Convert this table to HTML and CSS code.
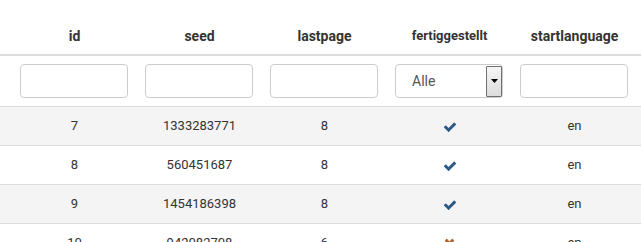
FILE: index.html
```html
<!DOCTYPE html>
<html>
<head>
<meta charset="utf-8">
<link rel="stylesheet" href="styles.css">
</head>
<body>
<table class="grid">
  <colgroup>
    <col class="gutter">
    <col class="c"><col class="c"><col class="c"><col class="c"><col class="c">
    <col class="end">
  </colgroup>
  <thead>
    <tr class="head">
      <th></th><th>id</th><th>seed</th><th>lastpage</th><th class="small">fertiggestellt</th><th>startlanguage</th><th></th>
    </tr>
    <tr class="filters">
      <td></td>
      <td><input class="field" type="text"></td>
      <td><input class="field" type="text"></td>
      <td><input class="field" type="text"></td>
      <td><div class="select"><span class="sel-text">Alle</span><span class="sel-btn"><svg width="7" height="4" viewBox="0 0 7 4"><path d="M0 0h7L3.5 4z" fill="#000"/></svg></span></div></td>
      <td><input class="field" type="text"></td>
      <td></td>
    </tr>
  </thead>
  <tbody>
    <tr class="odd"><td></td><td>7</td><td>1333283771</td><td>8</td><td><svg class="check" viewBox="0 0 1792 1792"><path d="M1671 566q0 40-28 68l-724 724-136 136q-28 28-68 28t-68-28l-136-136-362-362q-28-28-28-68t28-68l136-136q28-28 68-28t68 28l294 295 656-657q28-28 68-28t68 28l136 136q28 28 28 68z"/></svg></td><td>en</td><td></td></tr>
    <tr><td></td><td>8</td><td>560451687</td><td>8</td><td><svg class="check" viewBox="0 0 1792 1792"><path d="M1671 566q0 40-28 68l-724 724-136 136q-28 28-68 28t-68-28l-136-136-362-362q-28-28-28-68t28-68l136-136q28-28 68-28t68 28l294 295 656-657q28-28 68-28t68 28l136 136q28 28 28 68z"/></svg></td><td>en</td><td></td></tr>
    <tr class="odd"><td></td><td>9</td><td>1454186398</td><td>8</td><td><svg class="check" viewBox="0 0 1792 1792"><path d="M1671 566q0 40-28 68l-724 724-136 136q-28 28-68 28t-68-28l-136-136-362-362q-28-28-28-68t28-68l136-136q28-28 68-28t68 28l294 295 656-657q28-28 68-28t68 28l136 136q28 28 28 68z"/></svg></td><td>en</td><td></td></tr>
    <tr><td></td><td>10</td><td>942082708</td><td>6</td><td><svg class="cross" viewBox="0 0 1408 1792"><path d="M1298 1322q0 40-28 68l-136 136q-28 28-68 28t-68-28l-294-294-294 294q-28 28-68 28t-68-28l-136-136q-28-28-28-68t28-68l294-294-294-294q-28-28-28-68t28-68l136-136q28-28 68-28t68 28l294 294 294-294q28-28 68-28t68 28l136 136q28 28 28 68t-28 68l-294 294 294 294q28 28 28 68z"/></svg></td><td>en</td><td></td></tr>
  </tbody>
</table>
</body>
</html>
```

FILE: styles.css
```css
html, body {
  margin: 0;
  padding: 0;
  background: #fff;
  overflow: hidden;
}
.grid {
  width: 641px;
  table-layout: fixed;
  border-collapse: collapse;
  font-family: Roboto, "Liberation Sans", sans-serif;
  color: #333;
}
.gutter { width: 12px; }
.c { width: 125px; }
.end { width: 4px; }
.grid td, .grid th {
  padding: 0;
  text-align: center;
}
.head th {
  height: 44px;
  padding-bottom: 10px;
  vertical-align: bottom;
  font-size: 14px;
  line-height: 16px;
  font-weight: bold;
  color: #333;
  border-bottom: 2px solid #ddd;
}
.head th.small { font-size: 13px; }
.filters td {
  height: 42px;
  padding-top: 8px;
  vertical-align: top;
  border-bottom: 1px solid #ddd;
}
.field {
  display: block;
  box-sizing: border-box;
  width: 108px;
  height: 34px;
  margin: 0 0 0 8px;
  border: 1px solid #ccc;
  border-radius: 4px;
  background: #fff;
  padding: 0;
}
.select {
  box-sizing: border-box;
  width: 108px;
  height: 34px;
  margin: 0 0 0 8px;
  border: 1px solid #ccc;
  border-radius: 4px;
  display: flex;
  align-items: center;
  justify-content: space-between;
  padding: 0 0 0 16px;
}
.sel-text {
  font-size: 14px;
  color: #555;
}
.sel-btn {
  box-sizing: border-box;
  width: 16px;
  height: 31px;
  border: 1px solid #707070;
  border-radius: 1px;
  background: linear-gradient(#f6f6f6, #dcdcdc);
  display: flex;
  align-items: center;
  justify-content: center;
}
tbody td {
  height: 38px;
  font-size: 13px;
  line-height: 16px;
  vertical-align: middle;
  border-bottom: 1px solid #ddd;
}
tbody tr.odd td { background: #f4f4f4; }
.check {
  display: block;
  margin: 1px auto 0;
  width: 14px;
  height: 14px;
  fill: #2c5a87;
}
.cross {
  display: block;
  margin: 0 auto;
  width: 11px;
  height: 14px;
  fill: #b5652e;
}
```
